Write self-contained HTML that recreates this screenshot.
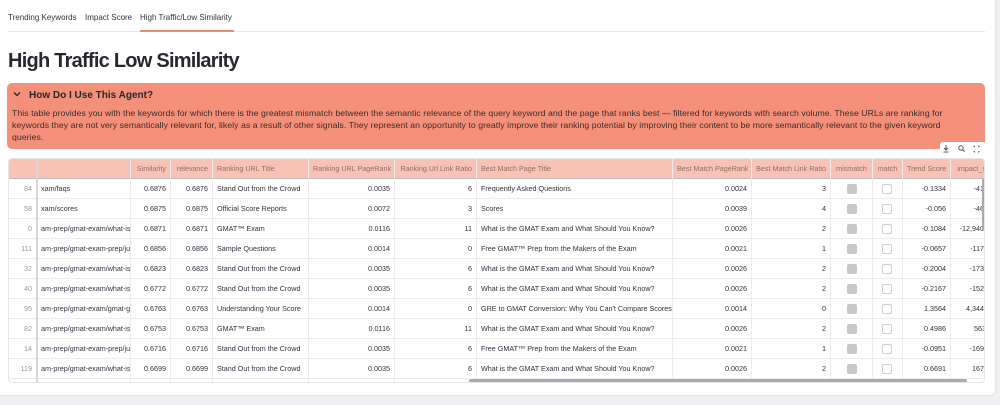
<!DOCTYPE html>
<html><head><style>
*{margin:0;padding:0;box-sizing:border-box}
body{width:1000px;height:405px;background:#f0f0f2;font-family:"Liberation Sans",sans-serif;position:relative;overflow:hidden;color:#31333f}
.card{position:absolute;left:0;top:0;width:995px;height:395px;background:#fff;border-radius:0 0 6px 0;box-shadow:0 0 2px rgba(0,0,0,.15)}
.tabs{position:absolute;left:8px;top:13px;font-size:8px;color:#31333f}
.tabs span{position:absolute;white-space:nowrap}
.tabline{position:absolute;left:8px;top:31px;width:977px;height:1px;background:#e6e6ea}
.active{position:absolute;left:140px;top:30px;width:94px;height:2px;background:#f28b70}
h1{position:absolute;left:8px;top:50px;font-size:20px;font-weight:bold;color:#262730;letter-spacing:-.75px}
.exp{position:absolute;left:7px;top:83px;width:978px;height:66px;background:#f49079;border-radius:5px}
.exp .t{position:absolute;left:22px;top:7px;font-size:10px;font-weight:bold;color:#262730}
.exp .c{position:absolute;left:5px;top:6px}
.exp p{position:absolute;left:5px;top:24px;width:968px;font-size:8.7px;line-height:12px;color:#3a2a2a;white-space:nowrap;letter-spacing:.05px}
.tbl{position:absolute;left:8px;top:158px;width:977px;height:225px;border:1px solid #e6e6ea;border-radius:4px;overflow:hidden;font-size:7.2px}
.hdr{position:absolute;left:0;top:0;width:977px;height:20px;background:#f8c3b4;border-bottom:1px solid #bdbdbd}
.cell{position:absolute;white-space:nowrap;overflow:hidden;height:20px;line-height:20px;padding:0 4px;border-right:1px solid #ececec}
.hdr .cell{color:#8a6f6a}
.row{position:absolute;left:0;width:977px;height:20px;border-bottom:1px solid #ececec}
.r{text-align:right}
.cb{position:absolute;top:5px;width:10px;height:10px;border-radius:2px}
.icons{position:absolute;left:940px;top:142px;width:46px;height:14px;background:#fff;border-radius:3px;font-size:8px;color:#555}
</style></head><body>
<div class="card">
<div class="tabs"><span style="left:0">Trending Keywords</span><span style="left:77px">Impact Score</span><span style="left:132px">High Traffic/Low Similarity</span></div>
<div class="tabline"></div><div class="active"></div>
<h1>High Traffic Low Similarity</h1>
<div class="exp">
<svg class="c" width="10" height="10" viewBox="0 0 10 10"><path d="M2 3.5 L5 6.5 L8 3.5" stroke="#262730" stroke-width="1.3" fill="none"/></svg>
<div class="t">How Do I Use This Agent?</div>
<p>This table provides you with the keywords for which there is the greatest mismatch between the semantic relevance of the query keyword and the page that ranks best — filtered for keywords with search volume. These URLs are ranking for<br>keywords they are not very semantically relevant for, likely as a result of other signals. They represent an opportunity to greatly improve their ranking potential by improving their content to be more semantically relevant to the given keyword<br>queries.</p>
</div>
<div class="icons"><svg width="46" height="14" viewBox="0 0 46 14"><path d="M6 3v5M4 6l2 2 2-2M3.5 10h5" stroke="#555" fill="none"/><circle cx="21" cy="6" r="2.2" stroke="#555" fill="none"/><path d="M22.6 7.6l2 2" stroke="#555"/><path d="M34 4h1M34 4v1M39 4h-1M39 4v1M34 10h1M34 10v-1M39 10h-1M39 10v-1" stroke="#555"/></svg></div>
<div class="tbl" id="t"></div>
</div>
<script>
var cols=[[0,28,'',1],[28,94,'',0],[122,40,'Similarity',1],[162,42,'relevance',1],[204,96,'Ranking URL Title',0],[300,86,'Ranking URL PageRank',1],[386,82,'Ranking Url Link Ratio',1],[468,196,'Best Match Page Title',0],[664,79,'Best Match PageRank',1],[743,79,'Best Match Link Ratio',1],[822,42,'mismatch',2],[864,30,'match',2],[894,48,'Trend Score',1],[942,40,'impact_s',1]];
var rows=[["84","xam/faqs","0.6876","0.6876","Stand Out from the Crowd","0.0035","6","Frequently Asked Questions","0.0024","3","-0.1334","-41."],
["58","xam/scores","0.6875","0.6875","Official Score Reports","0.0072","3","Scores","0.0039","4","-0.056","-46."],
["0","am-prep/gmat-exam/what-is","0.6871","0.6871","GMAT™ Exam","0.0116","11","What is the GMAT Exam and What Should You Know?","0.0026","2","-0.1084","-12,940."],
["111","am-prep/gmat-exam-prep/ju","0.6856","0.6856","Sample Questions","0.0014","0","Free GMAT™ Prep from the Makers of the Exam","0.0021","1","-0.0657","-117."],
["32","am-prep/gmat-exam/what-is","0.6823","0.6823","Stand Out from the Crowd","0.0035","6","What is the GMAT Exam and What Should You Know?","0.0026","2","-0.2004","-173."],
["40","am-prep/gmat-exam/what-is","0.6772","0.6772","Stand Out from the Crowd","0.0035","6","What is the GMAT Exam and What Should You Know?","0.0026","2","-0.2167","-152."],
["95","am-prep/gmat-exam/gmat-g","0.6763","0.6763","Understanding Your Score","0.0014","0","GRE to GMAT Conversion: Why You Can't Compare Scores","0.0014","0","1.3564","4,344."],
["82","am-prep/gmat-exam/what-is","0.6753","0.6753","GMAT™ Exam","0.0116","11","What is the GMAT Exam and What Should You Know?","0.0026","2","0.4986","563"],
["14","am-prep/gmat-exam-prep/ju","0.6716","0.6716","Stand Out from the Crowd","0.0035","6","Free GMAT™ Prep from the Makers of the Exam","0.0021","1","-0.0951","-169."],
["119","am-prep/gmat-exam/what-is","0.6699","0.6699","Stand Out from the Crowd","0.0035","6","What is the GMAT Exam and What Should You Know?","0.0026","2","0.6691","167."]];
var h='<div class="hdr">';
cols.forEach(c=>{h+='<div class="cell'+(c[3]==1?' r':'')+'" style="left:'+c[0]+'px;width:'+c[1]+'px;'+(c[3]==2?'text-align:center':'')+'">'+c[2]+'</div>'});
h+='</div>';
rows.concat([null]).forEach((r,i)=>{
 h+='<div class="row" style="top:'+(20+i*20)+'px">';
 var k=0;
 cols.forEach((c,j)=>{
  var txt='';
  if(r){ if(j==10) txt='<span class="cb" style="left:16px;background:#c8c8c8"></span>'; else if(j==11) txt='<span class="cb" style="left:9px;border:1px solid #d0d0d0"></span>'; else {txt=r[k];k++;} }
  h+='<div class="cell'+(c[3]==1?' r':'')+'" style="left:'+c[0]+'px;width:'+c[1]+'px;'+(j==0?'color:#999;':'')+'">'+txt+'</div>';
 });
 h+='</div>';
});
h+='<div style="position:absolute;left:27px;top:0;width:2px;height:225px;background:#d8d8d8"></div>';
h+='<div style="position:absolute;left:460px;top:220px;width:498px;height:4px;border-radius:2px;background:#aaa"></div>';
h+='<div style="position:absolute;left:973px;top:20px;width:3px;height:52px;border-radius:2px;background:#aaa"></div>';
document.getElementById('t').innerHTML=h;
</script>
</body></html>
